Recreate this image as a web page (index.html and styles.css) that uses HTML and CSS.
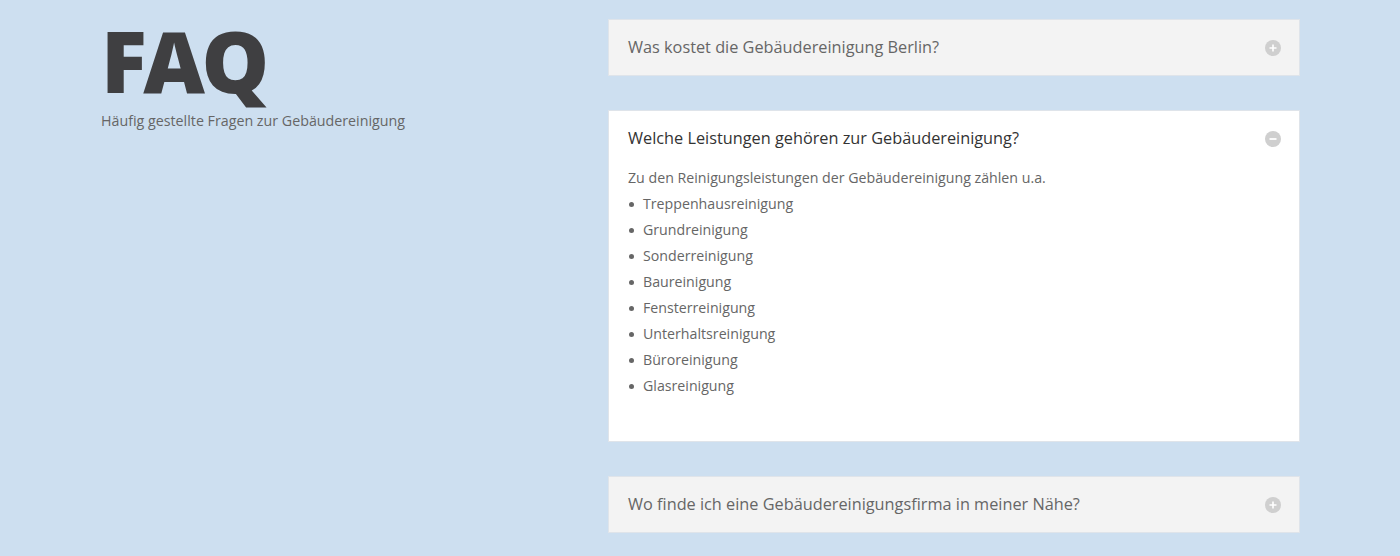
FILE: index.html
```html
<!DOCTYPE html>
<html lang="de">
<head>
    <meta charset="utf-8" />
    <meta name="viewport" content="width=device-width, initial-scale=1" />
    <title>FAQ - Gebäudereinigung</title>
    <link rel="stylesheet" href="styles.css">
</head>
<body>
    <div class="faq-section">
        <div class="faq-intro">
            <h1 class="faq-title">FAQ</h1>
            <p class="faq-subtitle">Häufig gestellte Fragen zur Gebäudereinigung</p>
        </div>

        <div class="faq-list">
            <div class="faq-item">
                <div class="faq-question">
                    <span>Was kostet die Gebäudereinigung Berlin?</span>
                    <svg class="faq-toggle" viewBox="0 0 16 16" width="16" height="16">
                        <circle cx="8" cy="8" r="8" fill="#cfcfcf" />
                        <path d="M8 4.5v7M4.5 8h7" stroke="#fff" stroke-width="1.6" />
                    </svg>
                </div>
            </div>

            <div class="faq-item is-open">
                <div class="faq-question">
                    <span>Welche Leistungen gehören zur Gebäudereinigung?</span>
                    <svg class="faq-toggle" viewBox="0 0 16 16" width="16" height="16">
                        <circle cx="8" cy="8" r="8" fill="#cfcfcf" />
                        <path d="M4.5 8h7" stroke="#fff" stroke-width="1.8" />
                    </svg>
                </div>
                <div class="faq-answer">
                    <p>Zu den Reinigungsleistungen der Gebäudereinigung zählen u.a.</p>
                    <ul>
                        <li>Treppenhausreinigung</li>
                        <li>Grundreinigung</li>
                        <li>Sonderreinigung</li>
                        <li>Baureinigung</li>
                        <li>Fensterreinigung</li>
                        <li>Unterhaltsreinigung</li>
                        <li>Büroreinigung</li>
                        <li>Glasreinigung</li>
                    </ul>
                </div>
            </div>

            <div class="faq-item">
                <div class="faq-question">
                    <span>Wo finde ich eine Gebäudereinigungsfirma in meiner Nähe?</span>
                    <svg class="faq-toggle" viewBox="0 0 16 16" width="16" height="16">
                        <circle cx="8" cy="8" r="8" fill="#cfcfcf" />
                        <path d="M8 4.5v7M4.5 8h7" stroke="#fff" stroke-width="1.6" />
                    </svg>
                </div>
            </div>
        </div>
    </div>
</body>
</html>
```

FILE: styles.css
```css
* {
    margin: 0;
    padding: 0;
    box-sizing: border-box;
}

body {
    font-family: 'Open Sans', 'Noto Sans', sans-serif;
    -webkit-font-smoothing: antialiased;
    background: #cddff0;
    color: #666;
    min-height: 100vh;
}

.faq-section {
    width: 1200px;
    margin: 0 auto;
    padding-top: 19px;
    display: grid;
    grid-template-columns: 1fr 692px;
}

.faq-intro {
    padding-left: 1px;
}

.faq-title {
    font-size: 85px;
    font-weight: 800;
    line-height: 80px;
    margin-top: 1px;
    color: #3f3f41;
    letter-spacing: -3.5px;
}

.faq-subtitle {
    margin-top: 10px;
    font-size: 14.25px;
    line-height: 22px;
    color: #666;
}

.faq-list {
    display: flex;
    flex-direction: column;
    gap: 34px;
}

.faq-item {
    background: #f3f3f3;
    border: 1px solid #dfe4ea;
}

.faq-item.is-open {
    background: #fff;
}

.faq-question {
    display: flex;
    align-items: center;
    justify-content: space-between;
    padding: 15px 18px 15px 19px;
    font-size: 16.3px;
    line-height: 25px;
    color: #666;
}

.is-open .faq-question {
    color: #333;
}

.faq-toggle {
    flex-shrink: 0;
}

.faq-answer {
    padding: 0 20px 42px 19px;
    font-size: 14.2px;
    line-height: 26px;
    color: #666;
}

.faq-answer p {
    margin-top: -1px;
}

.faq-answer ul {
    list-style: none;
}

.faq-answer li {
    position: relative;
    padding-left: 15px;
}

.faq-answer li::before {
    content: '';
    position: absolute;
    left: 1px;
    top: 11px;
    width: 5px;
    height: 5px;
    border-radius: 50%;
    background: #666;
}
```
